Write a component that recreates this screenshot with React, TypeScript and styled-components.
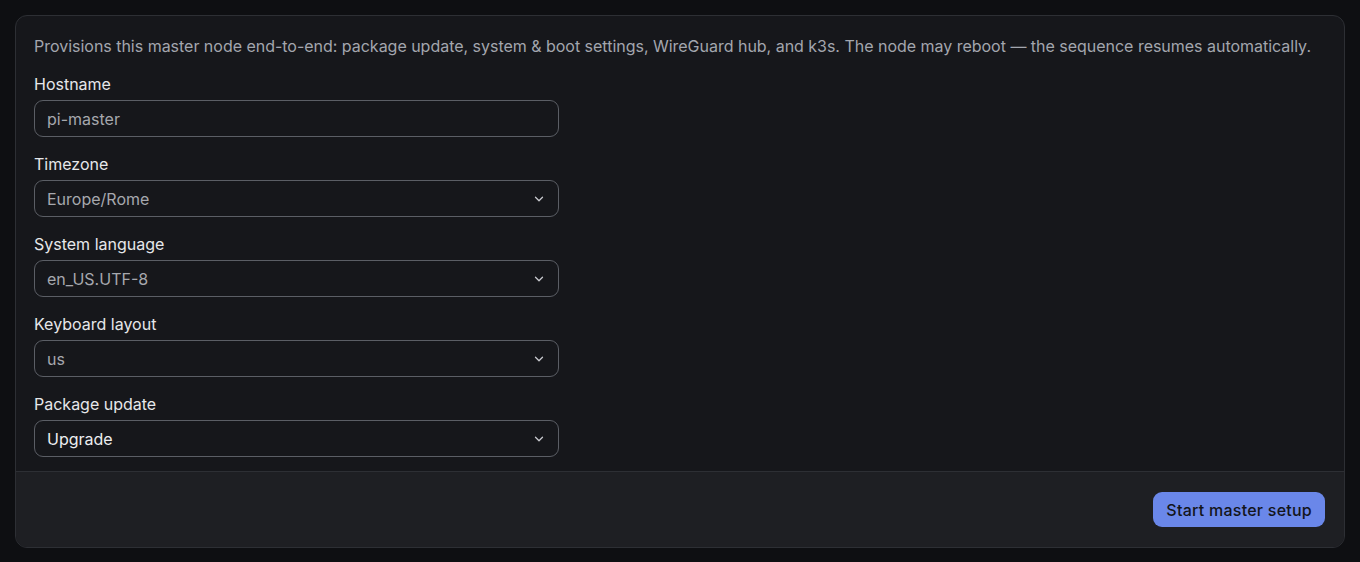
import React from "react";
import styled, { createGlobalStyle } from "styled-components";

const Global = createGlobalStyle`
  html, body {
    margin: 0;
    padding: 0;
    background: #0e0f12;
  }
  body {
    font-family: Inter, "Noto Sans", sans-serif;
    -webkit-font-smoothing: antialiased;
  }
  * { box-sizing: border-box; }
`;

const Page = styled.div`
  padding: 15px;
  min-height: 562px;
`;

const Card = styled.section`
  border: 1px solid #2d2f34;
  border-radius: 12px;
  background: #16171b;
  overflow: hidden;
  display: flex;
  flex-direction: column;
`;

const Body = styled.div`
  padding: 18px 18px 14px;
  display: flex;
  flex-direction: column;
  gap: 14px;
`;

const Description = styled.p`
  margin: 0;
  font-size: 16px;
  line-height: 24px;
  color: #a3a6ae;
  letter-spacing: -0.02px;
`;

const Field = styled.div`
  display: flex;
  flex-direction: column;
  gap: 4px;
  width: 525px;
  & + & { margin-top: 1px; }
`;

const Label = styled.label`
  font-size: 16px;
  line-height: 24px;
  color: #e6e7ea;
`;

const Control = styled.div<{ $strong?: boolean }>`
  height: 37px;
  border: 1px solid #5b5e65;
  border-radius: 9px;
  display: flex;
  align-items: center;
  justify-content: space-between;
  padding: 0 12px;
  font-size: 16px;
  color: ${(p) => (p.$strong ? "#eceef1" : "#a6a8ae")};
  background: #16171b;
`;

const Chevron = () => (
  <svg width="14" height="14" viewBox="0 0 24 24" fill="none" stroke="#c9cbd0" strokeWidth="2.2" strokeLinecap="round" strokeLinejoin="round">
    <path d="M6 9l6 6 6-6" />
  </svg>
);

const Footer = styled.div`
  border-top: 1px solid #2d2f34;
  background: #1e1f23;
  padding: 20px 19px 20px;
  display: flex;
  justify-content: flex-end;
`;

const Button = styled.button`
  height: 35px;
  padding: 0 13px;
  border: none;
  border-radius: 9px;
  background: #6a87e9;
  color: #13151b;
  font-family: Inter, "Noto Sans", sans-serif;
  font-size: 16px;
  font-weight: 500;
  letter-spacing: 0.25px;
`;

const fields: { label: string; value: string; select: boolean; strong?: boolean }[] = [
  { label: "Hostname", value: "pi-master", select: false },
  { label: "Timezone", value: "Europe/Rome", select: true },
  { label: "System language", value: "en_US.UTF-8", select: true },
  { label: "Keyboard layout", value: "us", select: true },
  { label: "Package update", value: "Upgrade", select: true, strong: true },
];

export default function App() {
  return (
    <>
      <Global />
      <Page>
        <Card>
          <Body>
            <Description>
              Provisions this master node end-to-end: package update, system &amp; boot settings, WireGuard hub, and k3s. The node may reboot — the sequence resumes automatically.
            </Description>
            {fields.map((f) => (
              <Field key={f.label}>
                <Label>{f.label}</Label>
                <Control $strong={f.strong}>
                  <span>{f.value}</span>
                  {f.select && <Chevron />}
                </Control>
              </Field>
            ))}
          </Body>
          <Footer>
            <Button>Start master setup</Button>
          </Footer>
        </Card>
      </Page>
    </>
  );
}
